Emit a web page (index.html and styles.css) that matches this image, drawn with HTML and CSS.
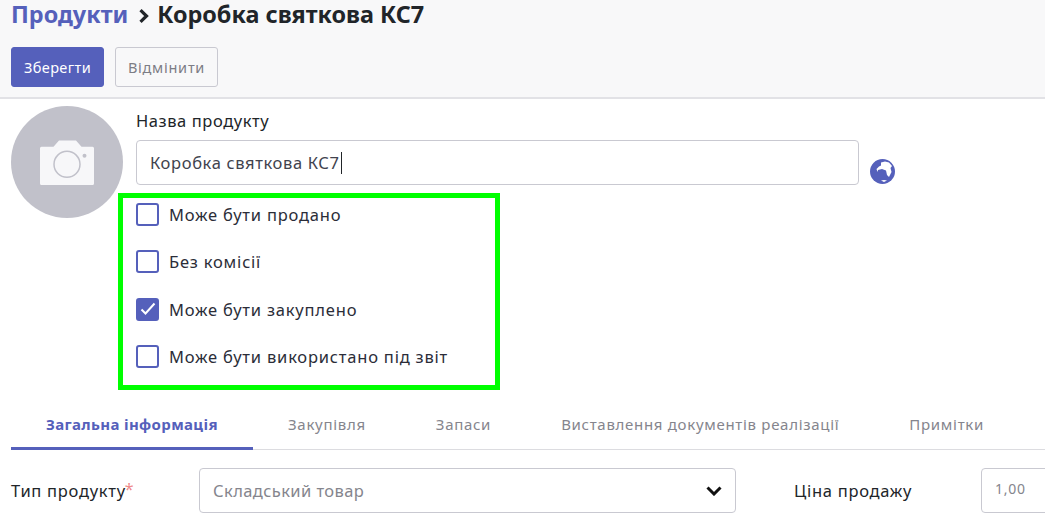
FILE: index.html
```html
<!DOCTYPE html>
<html lang="uk">
<head>
<meta charset="utf-8">
<title>Коробка святкова КС7</title>
<link rel="stylesheet" href="styles.css">
</head>
<body>
<header class="head">
  <h1 class="crumbs"><span class="crumb-link">Продукти</span><svg class="crumb-sep" width="10" height="14" viewBox="0 0 10 14"><path d="M1.500 1.200 L7.500 7 L1.500 12.800" fill="none" stroke="#212529" stroke-width="3.200"/></svg><span>Коробка святкова КС7</span></h1>
  <div class="actions">
    <button class="btn btn-primary">Зберегти</button>
    <button class="btn btn-secondary">Відмінити</button>
  </div>
</header>
<main class="sheet">
  <section class="top">
    <div class="avatar">
      <svg width="54" height="45" viewBox="0 0 54 45"><path fill="#f7f7f9" d="M1.500 6.700H13.500L19 0.500H36L41.500 6.700H52.500A1.500 1.500 0 0 1 54 8.200V43.500A1.500 1.500 0 0 1 52.500 45H1.500A1.500 1.500 0 0 1 0 43.500V8.200A1.500 1.500 0 0 1 1.500 6.700Z"/><circle cx="27" cy="24.300" r="13" fill="none" stroke="#c1c1ca" stroke-width="1.500"/><circle cx="44.500" cy="15.700" r="2" fill="#c1c1ca"/></svg>
    </div>
    <div class="name-block">
      <label class="name-label">Назва продукту</label>
      <div class="name-row">
        <div class="name-input">Коробка святкова КС7<span class="caret"></span></div>
        <svg class="globe" width="25" height="25" viewBox="0 0 25 25"><circle cx="12.500" cy="12.500" r="12.500" fill="#5560bb"/><path fill="#fff" d="M11 3.500 L15 2.500 L19 3.500 L22 7 L20.500 9 L21.500 13 L19 18 L17 16 L16 11.500 L12 10 L8 11 L7.500 13 L6.500 10 L9 7.500 L11 6.500Z"/><path fill="#fff" d="M11 21.500 L14 21 L17 21.500 L14 23 Z"/></svg>
      </div>
    </div>
    <div class="checks">
      <label class="check"><span class="box"></span>Може бути продано</label>
      <label class="check"><span class="box"></span>Без комісії</label>
      <label class="check"><span class="box box-on"><svg width="16" height="14" viewBox="0 0 16 14"><path d="M1.500 7.500 L5.500 11.500 L14.500 1.500" fill="none" stroke="#fff" stroke-width="2"/></svg></span>Може бути закуплено</label>
      <label class="check"><span class="box"></span>Може бути використано під звіт</label>
    </div>
  </section>
  <nav class="tabs">
    <div class="tab tab-active">Загальна інформація</div>
    <div class="tab">Закупівля</div>
    <div class="tab">Запаси</div>
    <div class="tab">Виставлення документів реалізації</div>
    <div class="tab">Примітки</div>
  </nav>
  <section class="fields">
    <label class="field-label type-label">Тип продукту<sup class="req">*</sup></label>
    <div class="select">Складський товар<svg width="16" height="10" viewBox="0 0 16 10"><path d="M1.500 1.500 L8 8 L14.500 1.500" fill="none" stroke="#111" stroke-width="3"/></svg></div>
    <label class="field-label price-label">Ціна продажу</label>
    <div class="price">1,00</div>
  </section>
</main>
</body>
</html>
```
FILE: styles.css
```css
* { box-sizing: border-box; }
html, body { margin: 0; height: 521px; overflow: hidden; background: #fff; }
body { font-family: "Noto Sans", "Open Sans", sans-serif; color: #212529; font-size: 16.5px; }
.head { height: 99px; background: #f8f8f9; border-bottom: 2px solid #e2e2e6; padding: 0 11px; }
.crumbs { margin: 0; height: 47px; display: flex; align-items: flex-start; font-size: 23.400px; line-height: 28px; font-weight: 700; }
.crumb-link { color: #5560bb; }
.crumb-sep { margin: 9px 8px 0 11px; }
.actions { display: flex; gap: 11px; }
.btn { height: 40px; border-radius: 3px; font-family: inherit; font-size: 14.500px; padding: 0; }
.btn-primary { width: 93px; background: #5560bb; border: 1px solid #5560bb; color: #fff; letter-spacing: .4px; }
.btn-secondary { width: 103px; background: #f8f8f9; border: 1px solid #c9c9d1; color: #7d7d85; letter-spacing: .75px; }
.sheet { padding: 0 0 0 11px; }
.top { display: grid; grid-template-columns: 107px 382px; grid-template-rows: 87px auto; }
.avatar { grid-row: 1 / 3; width: 112px; height: 112px; margin-top: 7px; border-radius: 50%; background: #c1c1ca; display: flex; align-items: center; justify-content: center; }
.name-block { padding: 11px 0 0 18px; width: 800px; }
.name-label { display: block; height: 30px; line-height: 22px; letter-spacing: .58px; }
.name-row { display: flex; align-items: center; gap: 11px; }
.name-input { width: 723px; height: 45px; border: 1px solid #c9c9d1; border-radius: 4px; padding-left: 13px; display: flex; align-items: center; letter-spacing: .63px; color: #41434e; }
.caret { width: 1px; height: 22px; background: #212529; margin-left: 1px; }
.globe { margin-top: 17px; }
.checks { height: 197px; margin-top: 7px; border: 5px solid #00ff00; padding: 0 13px; display: flex; flex-direction: column; gap: 14.300px; }
.check { height: 33px; display: flex; align-items: center; gap: 10px; letter-spacing: .8px; color: #2b2d38; flex: none; }
.box { width: 23px; height: 23px; border: 2px solid #5560bb; border-radius: 3px; flex: none; display: flex; align-items: center; justify-content: center; background: #fff; }
.box-on { background: #5560bb; }
.tabs { display: flex; height: 60px; border-bottom: 1px solid #dcdce0; }
.tab { height: 60px; padding: 0 35px; line-height: 68px; font-size: 15px; letter-spacing: .7px; color: #85858d; white-space: nowrap; }
.tab-active { width: 242px; font-weight: 700; letter-spacing: .35px; color: #5560bb; border-bottom: 3px solid #5560bb; }
.fields { display: flex; align-items: center; height: 45px; margin-top: 18px; }
.field-label { letter-spacing: .72px; color: #212529; white-space: nowrap; flex: none; }
.type-label { width: 188px; }
.req { color: #ef8a8a; font-size: 16px; line-height: 0; vertical-align: 2px; margin-left: -1px; }
.select { width: 537px; height: 45px; border: 1px solid #c9c9d1; border-radius: 4px; padding: 0 13px 0 13px; display: flex; align-items: center; justify-content: space-between; color: #85858d; letter-spacing: .41px; flex: none; }
.price-label { margin-left: 58px; width: 187px; }
.price { width: 100px; height: 45px; border: 1px solid #c9c9d1; border-radius: 4px; padding-left: 13px; line-height: 40px; font-size: 14px; letter-spacing: .75px; color: #85858d; flex: none; }
```
